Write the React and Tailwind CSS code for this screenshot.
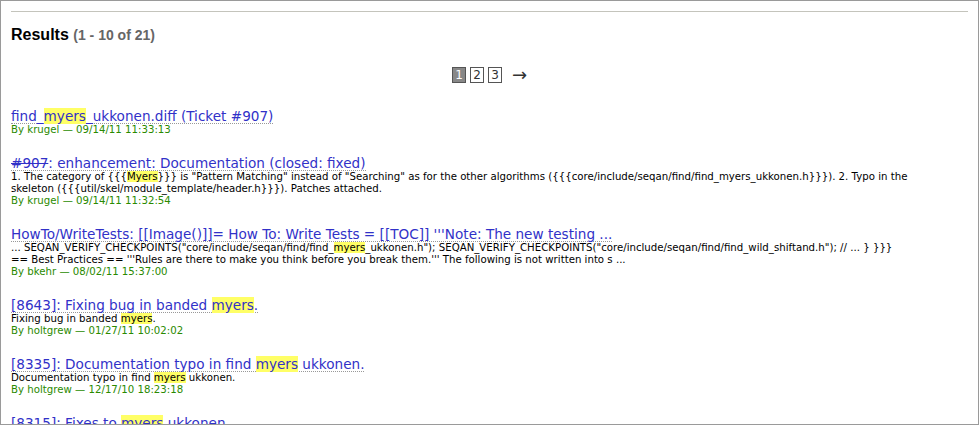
import React from "react";

const V = { fontFamily: '"DejaVu Sans", Verdana, sans-serif' };

function H({ children }) {
  return <span className="bg-[#ffff66]">{children}</span>;
}

function Title({ children }) {
  return (
    <div
      className="block w-fit text-[13.6px] leading-[14px] text-[#3131c8] border-b border-dotted border-[#999] whitespace-nowrap"
      style={V}
    >
      {children}
    </div>
  );
}

function Line({ children }) {
  return (
    <div className="text-[10.2px] leading-[12px] text-black whitespace-nowrap" style={V}>
      {children}
    </div>
  );
}

function Meta({ who, when }) {
  return (
    <div className="text-[10.2px] leading-[12px] text-[#2a8a00] whitespace-nowrap" style={V}>
      By {who} — {when}
    </div>
  );
}

export default function App() {
  return (
    <div className="w-[979px] h-[425px] border border-[#9a9a9a] overflow-hidden bg-white px-[10px] pt-[10px]">
      <div className="h-px bg-[#c4c4bc]" />
      <h2
        className="mt-[14px] text-[16px] leading-[18px] font-bold text-black whitespace-nowrap"
        style={{ fontFamily: '"Liberation Sans", Arial, sans-serif' }}
      >
        Results{" "}
        <span className="text-[14px] text-[#666]">(1 - 10 of 21)</span>
      </h2>
      <div
        className="mt-[23px] h-[16px] flex items-center justify-center gap-[4px] text-[12px] leading-[14px]"
        style={V}
      >
        <span className="w-[14px] h-[16px] flex items-center justify-center border border-[#555] bg-[#888] text-white">
          1
        </span>
        <span className="w-[14px] h-[16px] flex items-center justify-center border border-[#555] text-[#333]">
          2
        </span>
        <span className="w-[14px] h-[16px] flex items-center justify-center border border-[#555] text-[#333]">
          3
        </span>
        <span className="ml-[6px] text-[18px] leading-[16px] text-[#333]">→</span>
      </div>

      <div className="mt-[26px] flex flex-col gap-[20px]">
        <div>
          <Title>
            find_<H>myers</H>_ukkonen.diff (Ticket #907)
          </Title>
          <Meta who="krugel" when="09/14/11 11:33:13" />
        </div>

        <div>
          <Title>
            <span className="line-through">#907</span>: enhancement: Documentation (closed: fixed)
          </Title>
          <Line>
            1. The category of {"{{{"}
            <H>Myers</H>
            {"}}}"} is "Pattern Matching" instead of "Searching" as for the other algorithms ({"{{{"}core/include/seqan/find/find_myers_ukkonen.h{"}}}"}). 2. Typo in the
          </Line>
          <Line>
            skeleton ({"{{{"}util/skel/module_template/header.h{"}}}"}). Patches attached.
          </Line>
          <Meta who="krugel" when="09/14/11 11:32:54" />
        </div>

        <div>
          <Title>
            HowTo/WriteTests: [[Image()]]= How To: Write Tests = [[TOC]] '''Note: The new testing ...
          </Title>
          <Line>
            ... SEQAN_VERIFY_CHECKPOINTS("core/include/seqan/find/find_<H>myers</H>_ukkonen.h"); SEQAN_VERIFY_CHECKPOINTS("core/include/seqan/find/find_wild_shiftand.h"); // ... {"}"} {"}}}"}
          </Line>
          <Line>
            == Best Practices == '''Rules are there to make you think before you break them.''' The following is not written into s ...
          </Line>
          <Meta who="bkehr" when="08/02/11 15:37:00" />
        </div>

        <div>
          <Title>
            [8643]: Fixing bug in banded <H>myers</H>.
          </Title>
          <Line>
            Fixing bug in banded <H>myers</H>.
          </Line>
          <Meta who="holtgrew" when="01/27/11 10:02:02" />
        </div>

        <div>
          <Title>
            [8335]: Documentation typo in find <H>myers</H> ukkonen.
          </Title>
          <Line>
            Documentation typo in find <H>myers</H> ukkonen.
          </Line>
          <Meta who="holtgrew" when="12/17/10 18:23:18" />
        </div>

        <div>
          <Title>
            [8315]: Fixes to <H>myers</H> ukkonen.
          </Title>
          <Line>
            Fixes to <H>myers</H> ukkonen.
          </Line>
          <Meta who="holtgrew" when="12/10/10 11:02:11" />
        </div>
      </div>
    </div>
  );
}
